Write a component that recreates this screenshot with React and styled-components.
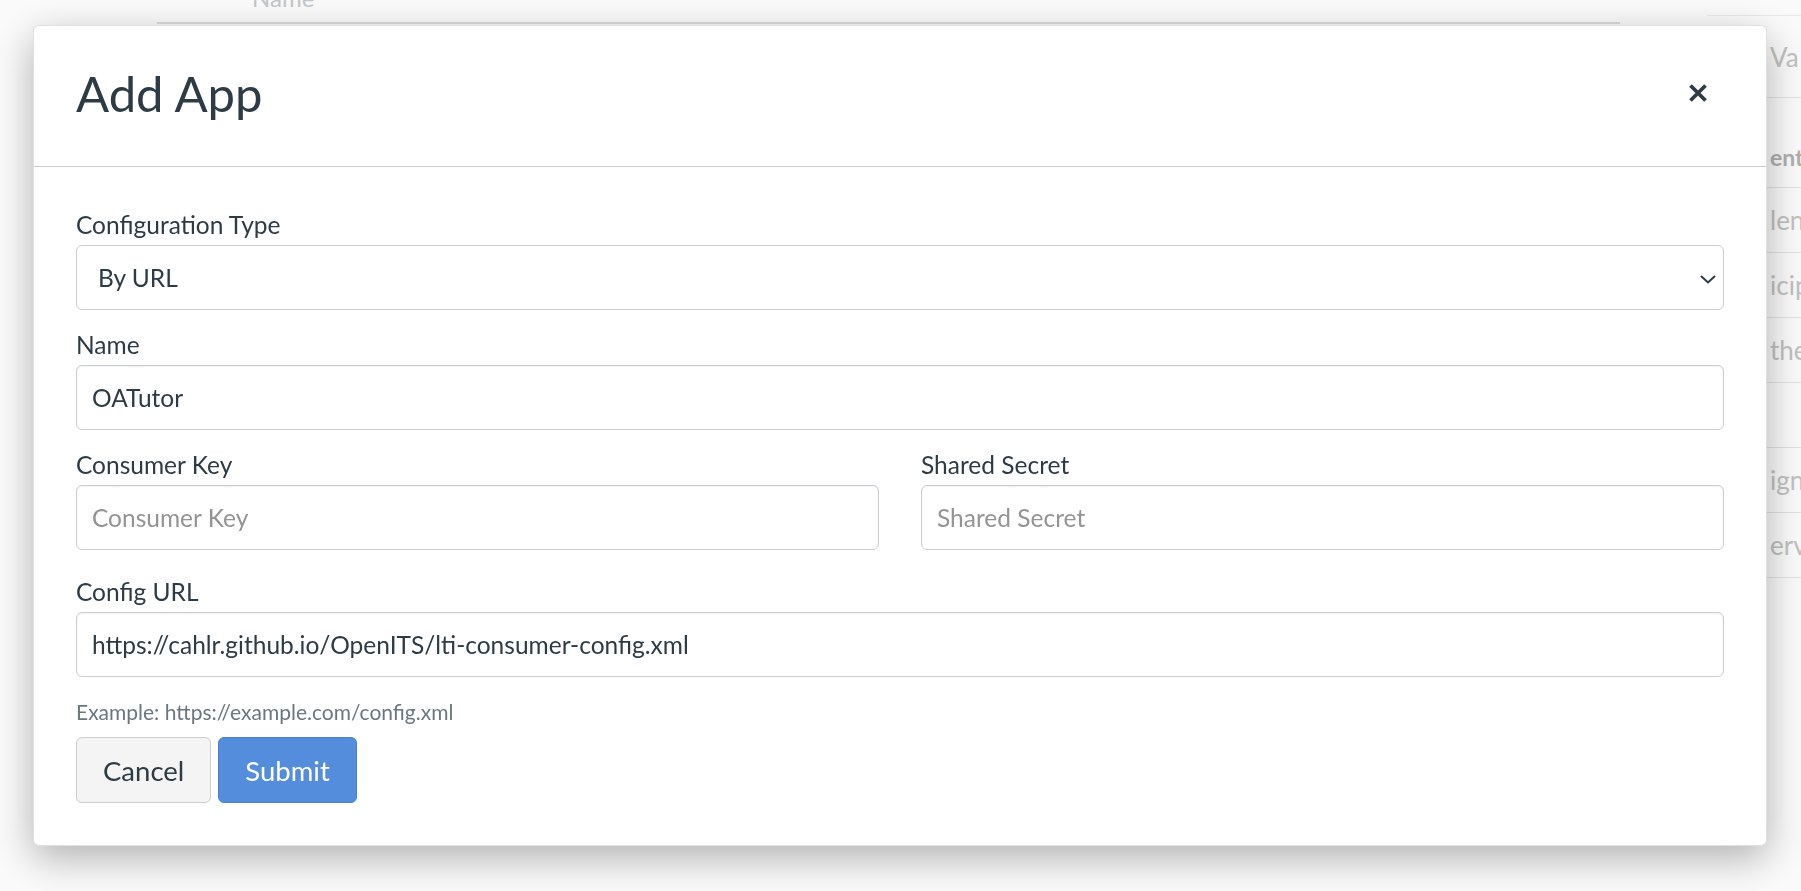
import React from 'react';
import styled, { createGlobalStyle } from 'styled-components';

const colors = {
  text: '#2d3b45',
  faded: '#c5cacd',
  fadedLine: '#dfe1e3',
  border: '#c7cdd1',
  placeholder: '#949494',
  hint: '#6b7780',
  blue: '#548ddc',
  blueBorder: '#4a80cb',
};

const font = `Lato, "Liberation Sans", sans-serif`;

const GlobalStyle = createGlobalStyle`
  html, body {
    margin: 0;
    padding: 0;
    background: #ffffff;
    font-family: ${font};
    color: ${colors.text};
    overflow: hidden;
  }
  * {
    box-sizing: border-box;
  }
`;

// page behind the dialog
const Page = styled.div`
  display: flex;
  width: 100vw;
  height: 100vh;
  overflow: hidden;
`;

const Main = styled.div`
  flex: 1;
  padding-left: 157px;
  padding-right: 87px;
`;

const HeaderRow = styled.div`
  display: flex;
  align-items: flex-end;
  height: 54px;
  margin-top: -30px;
  padding: 0 0 12px 95px;
  border-bottom: 2px solid ${colors.fadedLine};
  font-size: 24px;
  line-height: 24px;
  color: ${colors.faded};
`;

const Side = styled.div`
  width: 94px;
  margin-top: 15px;
  border-top: 1px solid #eeeeee;
`;

const SideRow = styled.div`
  display: flex;
  align-items: ${p => (p.header ? 'flex-end' : 'center')};
  height: ${p => p.height}px;
  padding: 0 0 ${p => (p.header ? 16 : 0)}px 63px;
  border-bottom: 1px solid #e6e6e6;
  font-size: ${p => (p.header ? 23 : 26)}px;
  font-weight: ${p => (p.header ? 700 : 400)};
  color: ${p => (p.header ? '#b3b3b3' : '#c4c4c4')};
  white-space: nowrap;
`;

// dialog
const Overlay = styled.div`
  position: fixed;
  inset: 0;
  display: flex;
  justify-content: center;
  align-items: flex-start;
  padding-top: 25px;
  background: rgba(0, 0, 0, 0.02);
`;

const Modal = styled.div`
  width: 1734px;
  margin-left: -1px;
  background: #ffffff;
  border: 1px solid rgba(0, 0, 0, 0.12);
  border-radius: 6px;
  box-shadow: 0 12px 40px rgba(0, 0, 0, 0.3);
`;

const ModalHeader = styled.div`
  display: flex;
  align-items: center;
  justify-content: space-between;
  height: 141px;
  padding: 0 55px 6px 42px;
  border-bottom: 1px solid #c9cccf;
`;

const Title = styled.h2`
  margin: 0;
  font-size: 49px;
  font-weight: 400;
  line-height: 1.2;
  color: ${colors.text};
`;

const CloseButton = styled.button`
  display: flex;
  align-items: center;
  justify-content: center;
  width: 26px;
  height: 26px;
  padding: 0;
  border: 0;
  background: transparent;
  color: ${colors.text};
  cursor: pointer;
`;

const Body = styled.form`
  padding: 40px 42px 42px;
`;

const Field = styled.div`
  margin-bottom: ${p => p.gap}px;
`;

const Row = styled.div`
  display: grid;
  grid-template-columns: 1fr 1fr;
  gap: 42px;
  margin-bottom: 24px;
`;

const Label = styled.label`
  display: block;
  margin-bottom: 2px;
  font-size: 24.5px;
  line-height: 36px;
  color: ${colors.text};
`;

const Input = styled.input`
  display: block;
  width: 100%;
  height: 65px;
  padding: 0 15px;
  border: 1px solid ${colors.border};
  border-radius: 6px;
  box-shadow: inset 0 1px 2px rgba(0, 0, 0, 0.06);
  font-family: ${font};
  font-size: 24.5px;
  color: ${colors.text};
  background: #ffffff;
  outline: none;
  &::placeholder {
    color: ${colors.placeholder};
  }
`;

const SelectWrap = styled.div`
  position: relative;
`;

const Select = styled.select`
  display: block;
  width: 100%;
  height: 65px;
  padding: 0 40px 0 21px;
  border: 1px solid ${colors.border};
  border-radius: 6px;
  appearance: none;
  font-family: ${font};
  font-size: 24.5px;
  color: ${colors.text};
  background: #ffffff;
  outline: none;
`;

const Chevron = styled.svg`
  position: absolute;
  right: 8px;
  top: 50%;
  margin-top: -3px;
  pointer-events: none;
`;

const Hint = styled.div`
  margin-top: 20px;
  font-size: 21px;
  line-height: 30px;
  color: ${colors.hint};
`;

const Actions = styled.div`
  display: flex;
  gap: 7px;
  margin-top: 10px;
`;

const Button = styled.button`
  height: 66px;
  padding: 0 26px;
  border-radius: 6px;
  border: 1px solid ${p => (p.primary ? colors.blueBorder : colors.border)};
  background: ${p => (p.primary ? colors.blue : '#f4f4f4')};
  color: ${p => (p.primary ? '#ffffff' : colors.text)};
  font-family: ${font};
  font-size: 27.5px;
  cursor: pointer;
`;

const sideRows = [
  { text: 'Va', height: 82 },
  { text: 'ent', height: 90, header: true },
  { text: 'len', height: 65 },
  { text: 'icip', height: 65 },
  { text: 'the', height: 65 },
  { text: '', height: 65 },
  { text: 'ign', height: 65 },
  { text: 'erv', height: 65 },
];

const App = () => (
  <>
    <GlobalStyle />
    <Page>
      <Main>
        <HeaderRow>Name</HeaderRow>
      </Main>
      <Side>
        {sideRows.map((r, i) => (
          <SideRow key={i} height={r.height} header={r.header}>
            {r.text}
          </SideRow>
        ))}
      </Side>
    </Page>

    <Overlay>
      <Modal role="dialog" aria-label="Add App">
        <ModalHeader>
          <Title>Add App</Title>
          <CloseButton type="button" aria-label="Close">
            <svg width="20" height="20" viewBox="0 0 20 20">
              <path d="M2.5 2.5 L17.5 17.5 M17.5 2.5 L2.5 17.5" stroke="currentColor" strokeWidth="3.8" />
            </svg>
          </CloseButton>
        </ModalHeader>

        <Body onSubmit={e => e.preventDefault()}>
          <Field gap={17}>
            <Label htmlFor="config-type">Configuration Type</Label>
            <SelectWrap>
              <Select id="config-type" defaultValue="url">
                <option value="url">By URL</option>
                <option value="manual">Manual Entry</option>
                <option value="xml">Paste XML</option>
              </Select>
              <Chevron width="16" height="9" viewBox="0 0 16 9">
                <path d="M1 1 L8 7.5 L15 1" fill="none" stroke={colors.text} strokeWidth="2" />
              </Chevron>
            </SelectWrap>
          </Field>

          <Field gap={17}>
            <Label htmlFor="app-name">Name</Label>
            <Input id="app-name" defaultValue="OATutor" />
          </Field>

          <Row>
            <div>
              <Label htmlFor="consumer-key">Consumer Key</Label>
              <Input id="consumer-key" placeholder="Consumer Key" />
            </div>
            <div>
              <Label htmlFor="shared-secret">Shared Secret</Label>
              <Input id="shared-secret" placeholder="Shared Secret" />
            </div>
          </Row>

          <Field gap={0}>
            <Label htmlFor="config-url">Config URL</Label>
            <Input id="config-url" defaultValue="https://cahlr.github.io/OpenITS/lti-consumer-config.xml" />
          </Field>
          <Hint>Example: https://example.com/config.xml</Hint>

          <Actions>
            <Button type="button">Cancel</Button>
            <Button type="submit" primary>
              Submit
            </Button>
          </Actions>
        </Body>
      </Modal>
    </Overlay>
  </>
);

export default App;
